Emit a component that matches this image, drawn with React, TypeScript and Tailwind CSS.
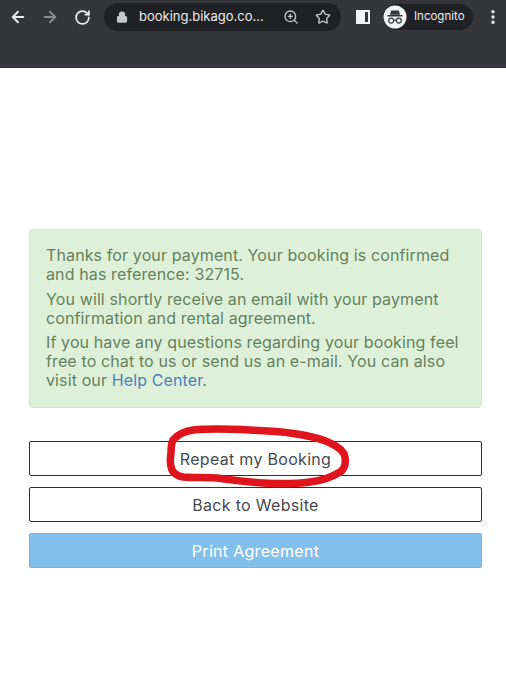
import { ArrowLeft, ArrowRight, RotateCw, Lock, ZoomIn, Star, MoreVertical } from "lucide-react";

function IncognitoIcon() {
  return (
    <svg width="24" height="24" viewBox="0 0 24 24">
      <circle cx="12" cy="12" r="11.5" fill="#f1f3f4" />
      <path d="M8.2 5.5h7.6l1.2 4.2H7z" fill="#35363a" />
      <rect x="4.5" y="10" width="15" height="1.5" fill="#35363a" />
      <circle cx="8.2" cy="15.6" r="2.5" fill="none" stroke="#35363a" strokeWidth="1.2" />
      <circle cx="15.8" cy="15.6" r="2.5" fill="none" stroke="#35363a" strokeWidth="1.2" />
      <path d="M10.7 15.2h2.6" stroke="#35363a" strokeWidth="1.2" />
    </svg>
  );
}

function Toolbar() {
  return (
    <div className="h-[68px] bg-[#35363a] pt-[3px] border-b border-[#2c2d30]">
      <div className="flex items-center h-[28px] pl-[9px] pr-[4px]">
        <ArrowLeft size={18} strokeWidth={2.5} className="text-[#e8eaed]" />
        <ArrowRight size={18} strokeWidth={2.5} className="text-[#8a8b8d] ml-[14px]" />
        <RotateCw size={17} strokeWidth={2.5} className="text-[#e8eaed] ml-[15px]" />
        <div className="flex items-center w-[237px] h-[28px] ml-[13px] pl-[12px] pr-[10px] rounded-full bg-[#202124]">
          <Lock size={12} strokeWidth={2.5} fill="#c4c6c9" className="text-[#c4c6c9]" />
          <span className="ml-[11px] text-[13px] text-[#e8eaed]">booking.bikago.co...</span>
          <ZoomIn size={16} className="text-[#c4c6c9] ml-auto" />
          <Star size={16} className="text-[#c4c6c9] ml-[16px]" />
        </div>
        <div className="flex w-[14px] h-[14px] ml-[15px] border-2 border-[#f1f3f4]">
          <div className="w-[7px] bg-[#f1f3f4]" />
        </div>
        <div className="flex items-center h-[26px] w-[90px] ml-[13px] rounded-full bg-[#202124] text-[11.5px] text-[#e8eaed]">
          <IncognitoIcon />
          <span className="ml-[7px]">Incognito</span>
        </div>
        <MoreVertical size={18} strokeWidth={2.5} className="text-[#e8eaed] ml-auto" />
      </div>
    </div>
  );
}

export default function App() {
  return (
    <div className="relative w-[506px] h-[689px] bg-white overflow-hidden font-['Inter',sans-serif]">
      <Toolbar />
      <div className="flex flex-col pl-[29px] pr-[24px] pt-[161px]">
        <div className="h-[179px] pl-[16px] pr-[16px] pt-[16px] rounded-[4px] border border-[#d6e9c6] bg-[#dff0d8] text-[16px] tracking-[0.12px] leading-[19px] text-[#648260]">
          <p className="mb-[6px]">Thanks for your payment. Your booking is confirmed and has reference: 32715.</p>
          <p className="mb-[5px]">You will shortly receive an email with your payment confirmation and rental agreement.</p>
          <p>
            If you have any questions regarding your booking feel free to chat to us or send us an e-mail. You can also visit our <a className="text-[#4a80bd]">Help Center</a>.
          </p>
        </div>
        <button className="h-[35px] mt-[33px] rounded-[2px] border border-[#2c3038] text-[16px] tracking-[0.3px] text-[#454a52]">Repeat my Booking</button>
        <button className="h-[35px] mt-[11px] rounded-[2px] border border-[#2c3038] text-[16px] tracking-[0.3px] text-[#454a52]">Back to Website</button>
        <button className="h-[35px] mt-[11px] rounded-[2px] border border-[#74b4e2] bg-[#82bfea] text-[16px] tracking-[0.3px] text-white">Print Agreement</button>
      </div>
      {/* red marker circle drawn on top of the screenshot */}
      <svg className="absolute left-0 top-0 pointer-events-none" width="506" height="689" viewBox="0 0 506 689">
        <path
          d="M173 440 C178 434 186 431 193 430 C212 428 232 429 250 430 C265 431 278 431 290 433 C305 435 320 438 330 443 C339 447 344 451 345 457 C346 464 345 469 340 472 C332 477 320 481 310 482 C295 484 280 484 263 483 C247 482 232 480 217 478 C205 477 194 478 183 477 C178 476 174 474 172 470 C170 465 170 459 171 453 C171 448 171 444 173 440 Z"
          fill="none"
          stroke="#e0141c"
          strokeWidth="7.5"
        />
      </svg>
    </div>
  );
}
